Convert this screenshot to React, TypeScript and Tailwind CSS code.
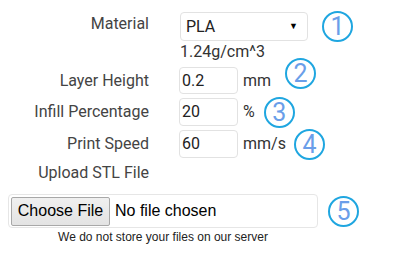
import React from "react";

function Badge({ n, className = "" }: { n: number; className?: string }) {
  return (
    <div
      className={
        "flex h-[31px] w-[31px] shrink-0 items-center justify-center rounded-full border-[2.5px] border-[#1fa6e0] text-[25px] leading-none text-[#6a9ee9] " +
        className
      }
      style={{ fontFamily: "Roboto, sans-serif" }}
    >
      {n}
    </div>
  );
}

function Label({ children, className = "" }: { children: React.ReactNode; className?: string }) {
  return (
    <div className={"w-[149px] shrink-0 text-right text-[16px] text-[#444] " + className}>{children}</div>
  );
}

export default function App() {
  return (
    <div
      className="h-[254px] w-[400px] overflow-hidden bg-white text-[#333]"
      style={{ fontFamily: "Roboto, sans-serif" }}
    >
      <div className="flex flex-col pt-[12px]">
        {/* Material */}
        <div className="flex h-[29px] items-center">
          <Label className="-mt-[5px]">Material</Label>
          <div className="ml-[31px] flex h-[29px] w-[128px] items-center justify-between rounded-[4px] border border-[#e2e2e2] pl-[5px] pr-[9px] text-[16px] text-[#222]">
            <span>PLA</span>
            <span className="text-[9px] text-black">▼</span>
          </div>
          <Badge n={1} className="ml-[14px]" />
        </div>
        <div className="ml-[180px] mt-[2px] h-[18px] text-[16px] leading-[18px] text-[#333]">1.24g/cm^3</div>

        {/* Layer height */}
        <div className="mt-[6px] flex h-[27px] items-center">
          <Label>Layer Height</Label>
          <div className="ml-[30px] flex h-[27px] w-[59px] items-center rounded-[4px] border border-[#e2e2e2] pl-[2px] text-[16px] text-[#222]">
            0.2
          </div>
          <span className="ml-[5px] text-[16px] text-[#333]">mm</span>
          <Badge n={2} className="relative -top-[7px] ml-[14px]" />
        </div>

        {/* Infill */}
        <div className="mt-[4px] flex h-[28px] items-center">
          <Label>Infill Percentage</Label>
          <div className="ml-[30px] flex h-[28px] w-[59px] items-center rounded-[4px] border border-[#e2e2e2] pl-[2px] text-[16px] text-[#222]">
            20
          </div>
          <span className="ml-[5px] text-[16px] text-[#333]">%</span>
          <Badge n={3} className="ml-[9px]" />
        </div>

        {/* Print speed */}
        <div className="mt-[4px] flex h-[28px] items-center">
          <Label>Print Speed</Label>
          <div className="ml-[30px] flex h-[28px] w-[59px] items-center rounded-[4px] border border-[#e2e2e2] pl-[2px] text-[16px] text-[#222]">
            60
          </div>
          <span className="ml-[5px] text-[16px] text-[#333]">mm/s</span>
          <Badge n={4} className="ml-[8px]" />
        </div>

        {/* Upload */}
        <div className="mt-[3px] flex h-[24px] items-center">
          <Label>Upload STL File</Label>
        </div>

        <div className="mt-[9px] flex h-[34px] items-center">
          <div
            className="ml-[8px] flex h-[34px] w-[310px] items-center rounded-[4px] border border-[#e6e6e6] pl-[2px]"
            style={{ fontFamily: '"Liberation Sans", Arial, sans-serif' }}
          >
            <div className="flex h-[29px] w-[99px] items-center justify-center rounded-[2px] border border-[#a8a8a8] bg-gradient-to-b from-[#f0f0f0] to-[#e3e3e3] text-[16px] text-black">
              Choose File
            </div>
            <span className="ml-[5px] text-[16px] text-black">No file chosen</span>
          </div>
          <Badge n={5} className="ml-[10px]" />
        </div>
        <div
          className="mt-[2px] w-[326px] text-center text-[12px] leading-[14px] text-[#222]"
          style={{ fontFamily: '"Liberation Sans", Arial, sans-serif' }}
        >
          We do not store your files on our server
        </div>
      </div>
    </div>
  );
}
